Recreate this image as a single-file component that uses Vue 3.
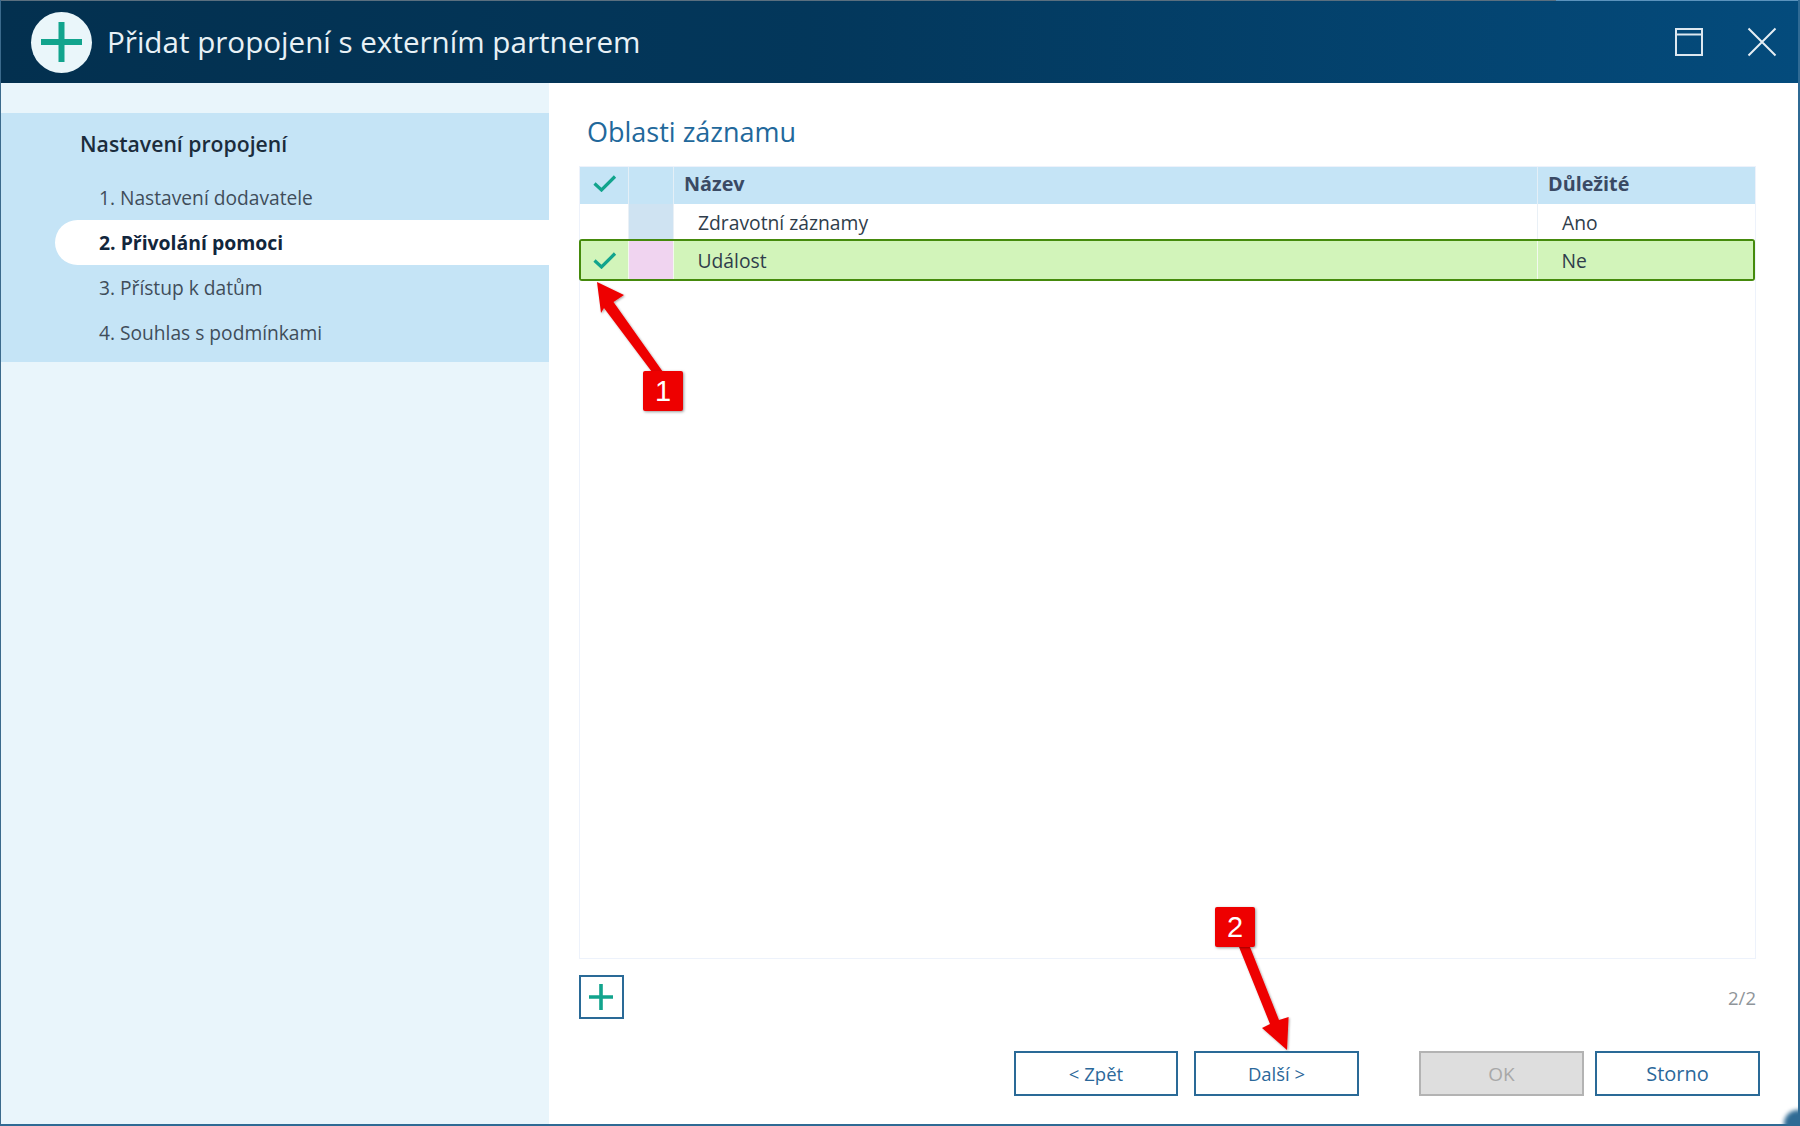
<script setup>
const steps = [
  { label: '1. Nastavení dodavatele', active: false },
  { label: '2. Přivolání pomoci', active: true },
  { label: '3. Přístup k datům', active: false },
  { label: '4. Souhlas s podmínkami', active: false },
]
const checkPath = 'M1.5 8.5 L8.5 15 L22 1.5'
</script>

<template>
  <div class="window">
    <header class="titlebar">
      <div class="logo">
        <svg width="41" height="40" viewBox="0 0 41 40"><path d="M0 20H41M20.5 0V40" stroke="#12a48d" stroke-width="6" stroke-linecap="round" /></svg>
      </div>
      <h1 class="wintitle">Přidat propojení s externím partnerem</h1>
      <div class="winctrl">
        <svg width="28" height="28" viewBox="0 0 28 28" fill="none" stroke="#dde8f0" stroke-width="2"><rect x="1" y="1" width="26" height="26" /><path d="M1 6.5H27" /></svg>
        <svg width="30" height="30" viewBox="0 0 30 30" fill="none" stroke="#e6eef4" stroke-width="2"><path d="M1.5 1.5L28.5 28.5M28.5 1.5L1.5 28.5" /></svg>
      </div>
    </header>

    <div class="body">
      <aside class="sidebar">
        <nav class="band">
          <div class="group">Nastavení propojení</div>
          <div v-for="s in steps" :key="s.label" class="step" :class="{ active: s.active }">{{ s.label }}</div>
        </nav>
      </aside>

      <main class="main">
        <h2 class="section">Oblasti záznamu</h2>
        <div class="table">
          <div class="row head">
            <div class="cell mid"><svg class="chk" width="24" height="17" viewBox="0 0 24 17" fill="none"><path :d="checkPath" stroke="#12a48d" stroke-width="3.2" /></svg></div>
            <div class="cell"></div>
            <div class="cell name">Název</div>
            <div class="cell imp">Důležité</div>
          </div>
          <div class="row plain">
            <div class="cell"></div>
            <div class="cell blue"></div>
            <div class="cell name">Zdravotní záznamy</div>
            <div class="cell imp">Ano</div>
          </div>
          <div class="row selected">
            <div class="cell mid"><svg class="chk" width="24" height="17" viewBox="0 0 24 17" fill="none"><path :d="checkPath" stroke="#12a48d" stroke-width="3.2" /></svg></div>
            <div class="cell pink"></div>
            <div class="cell name">Událost</div>
            <div class="cell imp">Ne</div>
          </div>
        </div>

        <div class="tools">
          <button class="addbtn" type="button">
            <svg class="addicon" width="24" height="26" viewBox="0 0 24 26"><path d="M0 13H24M12 0V26" stroke="#12a48d" stroke-width="3.6" stroke-linecap="round" /></svg>
          </button>
          <span class="count">2/2</span>
        </div>

        <div class="actions">
          <button class="btn back" type="button">&lt; Zpět</button>
          <button class="btn next" type="button">Další &gt;</button>
          <button class="btn ok" type="button">OK</button>
          <button class="btn cancel" type="button">Storno</button>
        </div>
      </main>
    </div>

    <div class="grip"></div>

    <svg class="arrows" width="1800" height="1126" viewBox="0 0 1800 1126">
      <defs>
        <filter id="soft" x="-20%" y="-20%" width="140%" height="140%">
          <feDropShadow dx="1" dy="1" stdDeviation="1.2" flood-color="#000" flood-opacity=".35" />
        </filter>
      </defs>
      <polygon filter="url(#soft)" fill="#ee0000" points="597,282 624,295 613.5,302 663,372 652,372 604,308 601,313" />
      <polygon filter="url(#soft)" fill="#ee0000" points="1239,947 1250,947 1279,1020 1288.6,1017 1287,1050 1262,1028 1270,1024" />
    </svg>
    <div class="tag tag1">1</div>
    <div class="tag tag2">2</div>
  </div>
</template>

<style scoped>
.window {
  position: relative;
  box-sizing: border-box;
  width: 1800px;
  height: 1126px;
  display: flex;
  flex-direction: column;
  background: #fff;
  border-left: 1px solid #3b6a8c;
  border-right: 2px solid #2f6a94;
  border-bottom: 2px solid #2f6a94;
  font-family: "Open Sans", "Noto Sans", sans-serif;
  overflow: hidden;
}
.titlebar {
  box-sizing: border-box;
  height: 83px;
  flex: none;
  display: flex;
  align-items: center;
  padding: 0 21px 0 30px;
  background: linear-gradient(90deg, #03304f 0%, #03375b 45%, #044b7c 100%);
  border-top: 1px solid;
  border-image: linear-gradient(90deg, #5a6f7f 0 86.5%, #5b93bd 86.5%) 1;
}
.logo {
  width: 61px;
  height: 61px;
  border-radius: 50%;
  background: #eaf6fa;
  display: flex;
  align-items: center;
  justify-content: center;
  flex: none;
}
.wintitle {
  margin: 0 0 2px 15px;
  font-size: 29.6px;
  font-weight: 400;
  color: #e8f1f6;
  white-space: nowrap;
  flex: 1;
}
.winctrl {
  display: flex;
  align-items: center;
  gap: 44px;
}
.body {
  flex: 1;
  display: flex;
  min-height: 0;
}
.sidebar {
  width: 548px;
  flex: none;
  background: #e9f5fb;
  padding-top: 30px;
}
.band {
  box-sizing: border-box;
  height: 249px;
  background: #c5e4f6;
}
.group {
  box-sizing: border-box;
  height: 62px;
  padding: 17px 0 0 79px;
  font-size: 21.2px;
  font-weight: 600;
  line-height: 28px;
  color: #1b2c3c;
}
.step {
  box-sizing: border-box;
  height: 45px;
  line-height: 45px;
  padding-left: 98px;
  font-size: 19.2px;
  color: #3f4d5a;
}
.step.active {
  margin-left: 54px;
  padding-left: 44px;
  background: #fff;
  border-radius: 22.5px 0 0 22.5px;
  font-size: 19.4px;
  font-weight: 700;
  color: #12263c;
}
.main {
  flex: 1;
  min-width: 0;
  display: flex;
  flex-direction: column;
  padding: 0 42px 28px 30px;
}
.section {
  box-sizing: border-box;
  height: 83px;
  margin: 0;
  padding: 31px 0 0 8px;
  font-size: 27px;
  line-height: 36px;
  font-weight: 400;
  color: #22689b;
}
.table {
  flex: 1;
  box-sizing: border-box;
  border: 1px solid #edf2fb;
  min-height: 0;
}
.row {
  display: grid;
  grid-template-columns: 48px 44px 1fr 217px;
  column-gap: 1px;
}
.cell {
  box-sizing: border-box;
  display: flex;
  align-items: center;
}
.mid {
  justify-content: center;
}
.chk {
  margin-left: 1px;
}
.head {
  height: 37px;
  background: #e4eff7;
}
.head .cell {
  background: #c5e4f6;
  padding-bottom: 4px;
  font-size: 19.8px;
  font-weight: 700;
  color: #3a4a64;
}
.head .name {
  padding-left: 10px;
}
.head .imp {
  padding-left: 10px;
}
.name,
.imp {
  font-size: 19.3px;
  color: #2f3d4b;
}
.plain {
  height: 35px;
  background: #e9f0f6;
}
.plain .cell {
  background: #fff;
  padding-top: 1px;
}
.plain .cell.blue {
  background: #cfe3f2;
}
.plain .name,
.selected .name {
  padding-left: 24px;
}
.plain .imp,
.selected .imp {
  padding-left: 24px;
}
.selected {
  box-sizing: border-box;
  height: 42px;
  margin: 0 0 0 -1px;
  border: 2.5px solid #458a0c;
  border-radius: 3px;
  grid-template-columns: 46.5px 44px 1fr 215.5px;
  background: #f3f9ef;
}
.selected .cell {
  background: #d2f4ba;
}
.selected .cell.pink {
  background: #f0d4f0;
}
.tools {
  flex: none;
  display: flex;
  align-items: center;
  justify-content: space-between;
  margin-top: 16px;
  height: 44px;
}
.addbtn {
  box-sizing: border-box;
  width: 45px;
  height: 44px;
  padding: 0;
  background: #fff;
  border: 2px solid #2a6a97;
  display: flex;
  align-items: center;
  justify-content: center;
}
.addicon {
  margin-right: 2px;
}
.count {
  font-size: 18.5px;
  color: #8f959a;
}
.actions {
  flex: none;
  display: flex;
  justify-content: flex-end;
  margin: 32px -4px 0 0;
  gap: 16px;
}
.btn {
  box-sizing: border-box;
  width: 165px;
  height: 45px;
  padding: 0;
  background: #fff;
  border: 2px solid #2a6a97;
  font-family: inherit;
  font-size: 18.5px;
  color: #2b689a;
}
.btn.back {
  width: 164px;
}
.btn.next {
  margin-right: 44px;
}
.btn.ok {
  background: #dedede;
  border-color: #b3b3b3;
  font-size: 19px;
  color: #a8a8a8;
}
.btn.cancel {
  margin-left: -5px;
  font-size: 20px;
}
.grip {
  position: absolute;
  right: -14px;
  bottom: -14px;
  width: 28px;
  height: 28px;
  border-radius: 50%;
  background: #2f6a94;
  filter: blur(2px);
}
.arrows {
  position: absolute;
  left: -1px;
  top: 0;
  pointer-events: none;
}
.tag {
  position: absolute;
  width: 40px;
  height: 40px;
  border-radius: 2px;
  background: #ee0000;
  box-shadow: 1px 1px 3px rgba(0, 0, 0, .4);
  color: #fff;
  font-family: "Liberation Sans", Arial, sans-serif;
  font-size: 29px;
  line-height: 40px;
  text-align: center;
}
.tag1 {
  left: 642px;
  top: 371px;
}
.tag2 {
  left: 1214px;
  top: 907px;
}
</style>
